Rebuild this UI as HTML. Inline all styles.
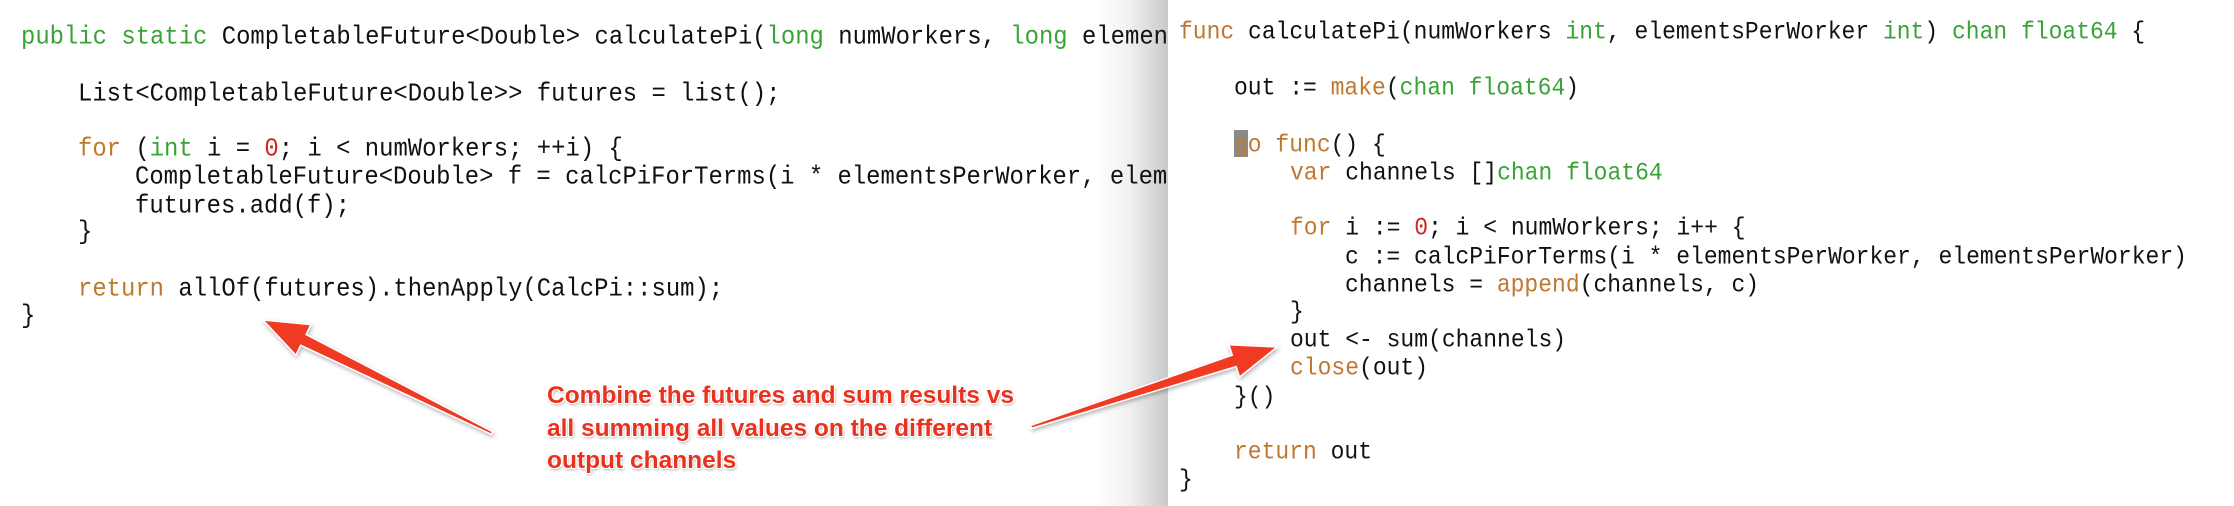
<!DOCTYPE html>
<html><head><meta charset="utf-8"><style>
html,body{margin:0;padding:0;width:2234px;height:506px;overflow:hidden;background:#fff;position:relative}
.l{position:absolute;white-space:pre;font-family:"Liberation Mono","DejaVu Sans Mono",monospace;color:#111;line-height:28px;transform:scaleY(1.08);transform-origin:left center}
.L{font-size:23.9px}
.R{font-size:23px}
.k{color:#3aa338}.o{color:#c0782f}.n{color:#c8281e}
#lp{position:absolute;left:0;top:0;width:1168px;height:506px;background:linear-gradient(to right,#fff 0,#fff 1095px,#f0f0f0 1130px,#c9c9c9 1168px);overflow:hidden}
#rp{position:absolute;left:1168px;top:0;width:1066px;height:506px;background:#fff;overflow:hidden}
.t{position:absolute;left:547px;font-family:"Liberation Sans",sans-serif;font-weight:bold;font-size:24.5px;color:#e8321e;white-space:pre;letter-spacing:0px;
text-shadow:1px 1px 0 #fff,-1px -1px 0 #fff,1px -1px 0 #fff,-1px 1px 0 #fff,1px 2px 3px rgba(0,0,0,.35)}
</style></head><body>
<div id="lp">
<div class="l L" style="left:21px;top:24px"><span class="k">public static</span> CompletableFuture&lt;Double&gt; calculatePi(<span class="k">long</span> numWorkers, <span class="k">long</span> elementsPerWorker) {</div>
<div class="l L" style="left:78px;top:81px">List&lt;CompletableFuture&lt;Double&gt;&gt; futures = list();</div>
<div class="l L" style="left:78px;top:136px"><span class="o">for</span> (<span class="k">int</span> i = <span class="n">0</span>; i &lt; numWorkers; ++i) {</div>
<div class="l L" style="left:135px;top:164px">CompletableFuture&lt;Double&gt; f = calcPiForTerms(i * elementsPerWorker, elementsPerWorker);</div>
<div class="l L" style="left:135px;top:193px">futures.add(f);</div>
<div class="l L" style="left:78px;top:219px">}</div>
<div class="l L" style="left:78px;top:276px"><span class="o">return</span> allOf(futures).thenApply(CalcPi::sum);</div>
<div class="l L" style="left:21px;top:303px">}</div>
</div>
<div id="rp">
<div style="position:absolute;left:66px;top:130px;width:14px;height:27px;background:#8a8a8a"></div>
<div class="l R" style="left:11px;top:18px"><span class="o">func</span> calculatePi(numWorkers <span class="k">int</span>, elementsPerWorker <span class="k">int</span>) <span class="k">chan float64</span> {</div>
<div class="l R" style="left:66px;top:74px">out := <span class="o">make</span>(<span class="k">chan float64</span>)</div>
<div class="l R" style="left:66px;top:131px"><span class="o">go func</span>() {</div>
<div class="l R" style="left:122px;top:159px"><span class="o">var</span> channels []<span class="k">chan float64</span></div>
<div class="l R" style="left:122px;top:214px"><span class="o">for</span> i := <span class="n">0</span>; i &lt; numWorkers; i++ {</div>
<div class="l R" style="left:177px;top:243px">c := calcPiForTerms(i * elementsPerWorker, elementsPerWorker)</div>
<div class="l R" style="left:177px;top:271px">channels = <span class="o">append</span>(channels, c)</div>
<div class="l R" style="left:122px;top:298px">}</div>
<div class="l R" style="left:122px;top:326px">out &lt;- sum(channels)</div>
<div class="l R" style="left:122px;top:354px"><span class="o">close</span>(out)</div>
<div class="l R" style="left:66px;top:383px">}()</div>
<div class="l R" style="left:66px;top:438px"><span class="o">return</span> out</div>
<div class="l R" style="left:11px;top:466px">}</div>
</div>
<svg width="2234" height="506" style="position:absolute;left:0;top:0">
<defs><filter id="s" x="-20%" y="-20%" width="140%" height="140%"><feDropShadow dx="1" dy="2" stdDeviation="2" flood-color="#000" flood-opacity=".3"/></filter></defs>
<g fill="#f03a22" stroke="#fff" stroke-width="1.5" filter="url(#s)">
<polygon points="263,320 310.9,324.6 306.1,334.5 492.7,431.7 491.3,434.3 300.7,345.3 295.9,355.2"/>
<polygon points="1277,347 1228.9,344.7 1232.3,355.2 1030.5,425.6 1031.5,428.4 1236.1,366.6 1239.5,377.1"/>
</g>
</svg>
<div class="t" style="top:382px">Combine the futures and sum results vs</div>
<div class="t" style="top:415px">all summing all values on the different</div>
<div class="t" style="top:447px">output channels</div>
</body></html>
